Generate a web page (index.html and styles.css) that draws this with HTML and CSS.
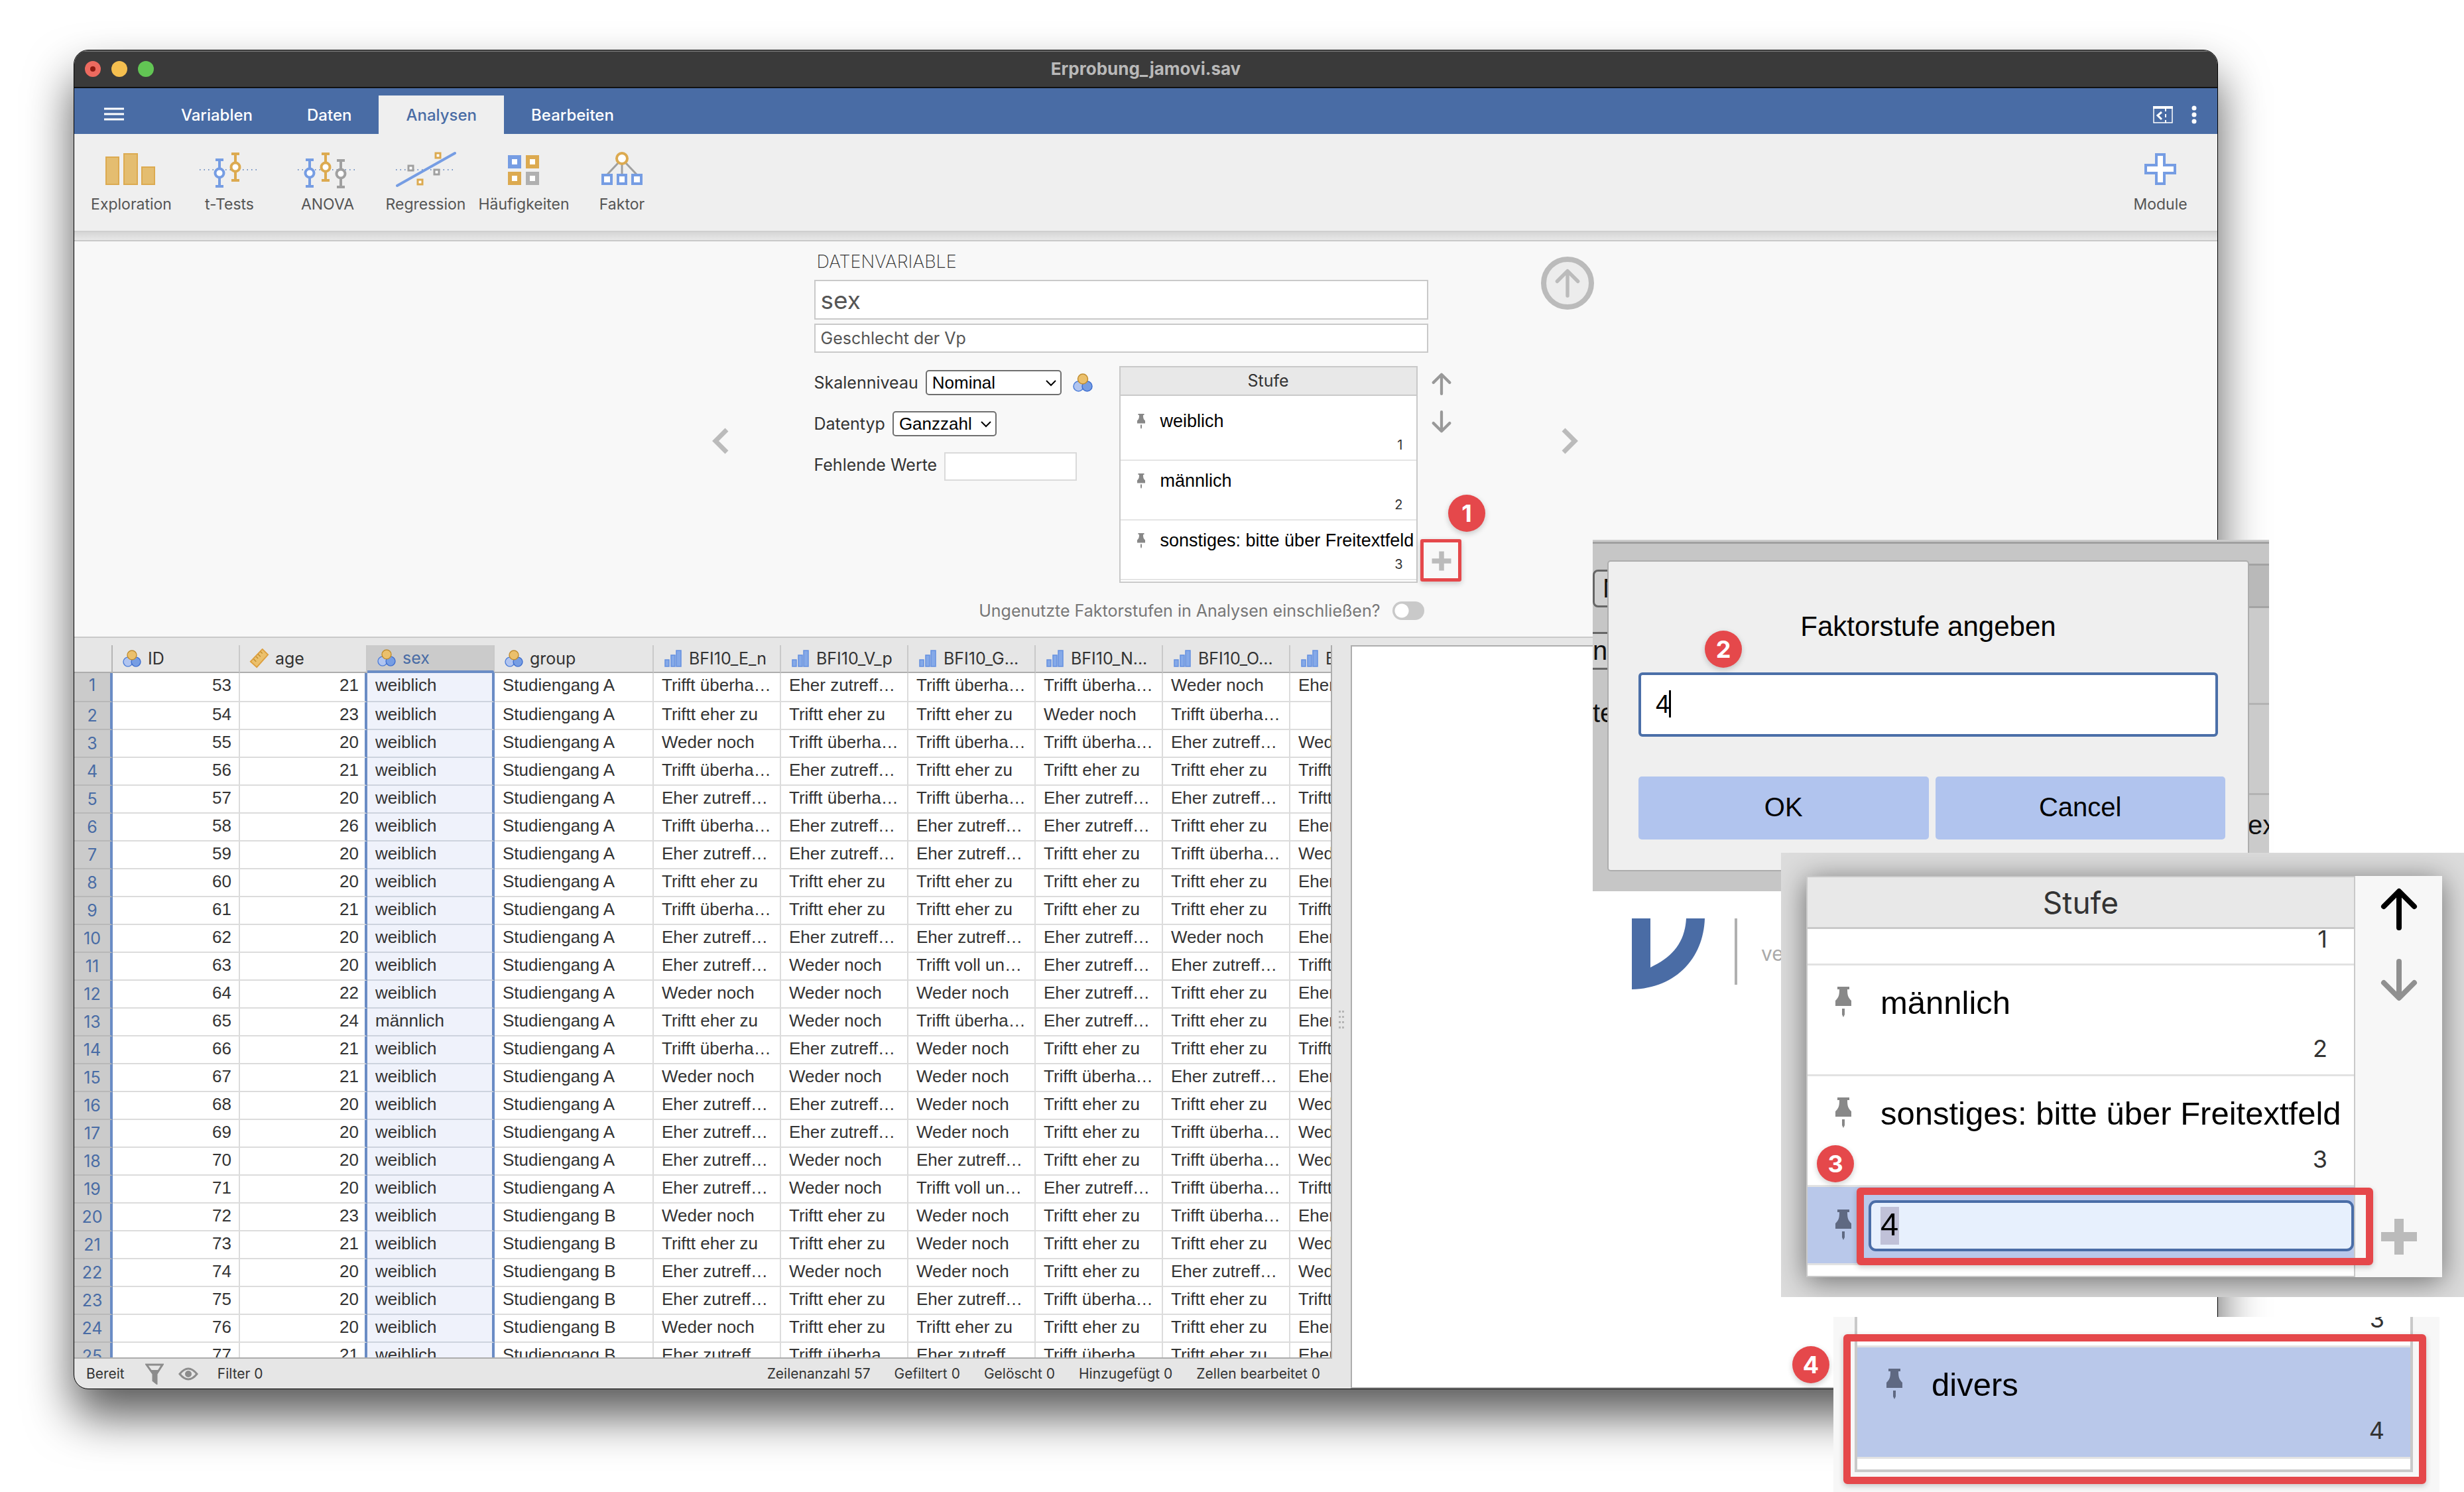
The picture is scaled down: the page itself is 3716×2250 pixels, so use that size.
FILE: index.html
```html
<!DOCTYPE html>
<html lang="de">
<head>
<meta charset="utf-8">
<title>Erprobung_jamovi.sav</title>
<link rel="stylesheet" href="styles.css">
</head>
<body>
<svg class="symbols" aria-hidden="true">
  <symbol id="nominal" viewBox="0 0 30 28">
    <circle cx="8.500" cy="19.500" r="7.500" fill="#b1c5f0" stroke="#4f7fd9" stroke-width="1.500"/>
    <circle cx="21.500" cy="19.500" r="7.500" fill="#769de3" stroke="#3f6fd0" stroke-width="1.500"/>
    <circle cx="15" cy="8.500" r="7.500" fill="#ebc06c" stroke="#c08d30" stroke-width="1.500"/>
  </symbol>
  <symbol id="continuous" viewBox="0 0 32 32">
    <path d="M2 21 21 1 30 10 12 30Z" fill="#ebc06c" stroke="#dd9f3e" stroke-width="2"/>
    <path d="M7 17l4 4M11 13l3 3M14 9l4 4M18 5l3 3" stroke="#c08d30" stroke-width="1.500"/>
  </symbol>
  <symbol id="ordinal" viewBox="0 0 26 26">
    <path d="M1 15h6v10H1ZM10 8h6v17h-6ZM18 1h7v24h-7Z" fill="#85a9e8" stroke="#6490e0" stroke-width="1.500"/>
  </symbol>
  <symbol id="pin" viewBox="0 0 24 46">
    <path d="M3 0h18v4h-3c0 9 1 12 6 17v8H0v-8c5-5 6-8 6-17H3ZM10 33h4v9l-2 4-2-4Z" fill="currentColor"/>
  </symbol>
  <symbol id="arrow-up" viewBox="0 0 56 64">
    <path d="M28 60V7M5 28 28 5l23 23" fill="none" stroke="currentColor" stroke-width="8" stroke-linecap="round" stroke-linejoin="round"/>
  </symbol>
  <symbol id="arrow-down" viewBox="0 0 56 64">
    <path d="M28 4v53M5 36l23 23 23-23" fill="none" stroke="currentColor" stroke-width="8" stroke-linecap="round" stroke-linejoin="round"/>
  </symbol>
  <symbol id="plus" viewBox="0 0 56 56">
    <path d="M21 1h14v20h20v14H35v20H21V35H1V21h20Z" fill="currentColor"/>
  </symbol>
</svg>

<main class="window">
  <header class="titlebar">
    <div class="lights"><span class="light close"></span><span class="light minimise"></span><span class="light zoom"></span></div>
    <h1 class="title">Erprobung_jamovi.sav</h1>
  </header>

  <nav class="tabs">
    <button class="menu" aria-label="Menü"><svg width="30" height="20" viewBox="0 0 30 20"><path d="M0 2h30M0 10h30M0 18h30" stroke="#fff" stroke-width="3"/></svg></button>
    <button class="tab">Variablen</button>
    <button class="tab">Daten</button>
    <button class="tab active">Analysen</button>
    <button class="tab">Bearbeiten</button>
    <div class="tab-tools">
      <button aria-label="Ergebnisse einblenden"><svg width="30" height="26" viewBox="0 0 30 26"><path d="M1 2h28v23H1Z" fill="none" stroke="#fff" stroke-width="1.500"/><path d="M0 2h30" stroke="#fff" stroke-width="4"/><path d="M13 9l-6 5 6 6" fill="none" stroke="#fff" stroke-width="3"/><path d="M19 4v4M19 12v5M19 21v4" stroke="#fff" stroke-width="2"/></svg></button>
      <button aria-label="Optionen"><svg width="8" height="28" viewBox="0 0 8 28"><g fill="#fff"><circle cx="4" cy="4" r="3.500"/><circle cx="4" cy="14" r="3.500"/><circle cx="4" cy="24" r="3.500"/></g></svg></button>
    </div>
  </nav>

  <section class="ribbon">
    <button class="tool"><svg width="96" height="56" viewBox="0 0 96 56"><g fill="#e4bd70" stroke="#dcaa50" stroke-width="2"><path d="M10 9h19v41H10ZM37 4h20v46H37ZM64 24h19v26H64Z"/></g></svg>Exploration</button>
    <button class="tool"><svg width="96" height="56" viewBox="0 0 96 56"><path d="M3 28h90" stroke="#4b74b5" stroke-width="1.500" stroke-dasharray="1.500 5"/><g fill="#fff" stroke="#769de3" stroke-width="4"><path d="M33 13v40M27 13h12M27 53h12"/><circle cx="33" cy="33" r="6.500"/></g><g fill="#fff" stroke="#dcaa50" stroke-width="4"><path d="M57 4v40M51 4h12M51 44h12"/><circle cx="57" cy="24" r="6.500"/></g></svg>t-Tests</button>
    <button class="tool"><svg width="96" height="56" viewBox="0 0 96 56"><path d="M3 28h90" stroke="#4b74b5" stroke-width="1.500" stroke-dasharray="1.500 5"/><g fill="#fff" stroke="#769de3" stroke-width="4"><path d="M21 13v40M15 13h12M15 53h12"/><circle cx="21" cy="33" r="6.500"/></g><g fill="#fff" stroke="#dcaa50" stroke-width="4"><path d="M45 4v40M39 4h12M39 44h12"/><circle cx="45" cy="24" r="6.500"/></g><g fill="#fff" stroke="#a0a0a0" stroke-width="4"><path d="M68 14v40M62 14h12M62 54h12"/><circle cx="68" cy="34" r="6.500"/></g></svg>ANOVA</button>
    <button class="tool"><svg width="96" height="56" viewBox="0 0 96 56"><path d="M3 28h90" stroke="#4b74b5" stroke-width="1.500" stroke-dasharray="1.500 5"/><path d="M5 52 92 3" stroke="#769de3" stroke-width="4" stroke-linecap="round"/><g fill="#fff" stroke-width="3"><path d="M22 22h7v7h-7ZM61 28h7v7h-7Z" stroke="#a0a0a0"/><path d="M63 3h7v7h-7ZM36 43h7v7h-7Z" stroke="#dcaa50"/></g></svg>Regression</button>
    <button class="tool"><svg width="96" height="56" viewBox="0 0 96 56"><g fill="#fff" stroke-width="6"><path d="M27 9h14v14H27Z" stroke="#769de3"/><path d="M54 9h14v14H54ZM27 34h14v14H27Z" stroke="#dcaa50"/><path d="M54 34h14v14H54Z" stroke="#b0b0b0"/></g></svg>Häufigkeiten</button>
    <button class="tool"><svg width="96" height="56" viewBox="0 0 96 56"><path d="M42 18 26 35M48 18v17M54 18l16 17" stroke="#a0a0a0" stroke-width="3"/><circle cx="48" cy="11" r="8" fill="#fff" stroke="#dcaa50" stroke-width="4"/><g fill="#fff" stroke="#769de3" stroke-width="4"><path d="M19 36h13v13H19ZM42 36h12v13H42ZM64 36h13v13H64Z"/></g></svg>Faktor</button>
    <button class="tool module"><svg width="96" height="56" viewBox="0 0 96 56"><path d="M42 5h12v16h16v12H54v16H42V33H26V21h16Z" fill="#fff" stroke="#769de3" stroke-width="4"/></svg>Module</button>
  </section>
  <div class="ribbon-shadow"></div>

  <section class="editor">
    <button class="previous" aria-label="Vorherige Variable"><svg width="25" height="40" viewBox="0 0 25 40"><path d="M22 3 5 20l17 17" fill="none" stroke="#bbb" stroke-width="7"/></svg></button>
    <div class="form">
      <h2 class="kind">DATENVARIABLE</h2>
      <input class="name" value="sex" aria-label="Name">
      <input class="description" value="Geschlecht der Vp" aria-label="Beschreibung">
      <div class="details">
        <div class="fields">
          <div class="field"><label for="measure">Skalenniveau</label><span class="select wide"><select id="measure"><option>Nominal</option></select><svg width="18" height="12" viewBox="0 0 18 12"><path d="M2 2l7 7 7-7" fill="none" stroke="#000" stroke-width="2"/></svg></span><svg class="measure-icon" width="30" height="28"><use href="#nominal"/></svg></div>
          <div class="field"><label for="type">Datentyp</label><span class="select"><select id="type"><option>Ganzzahl</option></select><svg width="18" height="12" viewBox="0 0 18 12"><path d="M2 2l7 7 7-7" fill="none" stroke="#000" stroke-width="2"/></svg></span></div>
          <div class="field"><label for="missing">Fehlende Werte</label><input id="missing" class="missing"></div>
        </div>
        <div class="levels">
          <div class="levels-head">Stufe</div>
          <ul>
            <li><svg class="pin"><use href="#pin"/></svg><span class="label">weiblich</span><span class="value">1</span></li>
            <li><svg class="pin"><use href="#pin"/></svg><span class="label">männlich</span><span class="value">2</span></li>
            <li><svg class="pin"><use href="#pin"/></svg><span class="label">sonstiges: bitte über Freitextfeld</span><span class="value">3</span></li>
          </ul>
        </div>
        <div class="level-tools">
          <button aria-label="Nach oben"><svg width="30" height="34"><use href="#arrow-up"/></svg></button>
          <button aria-label="Nach unten"><svg width="30" height="34"><use href="#arrow-down"/></svg></button>
          <button class="add" aria-label="Stufe hinzufügen"><svg width="30" height="30"><use href="#plus"/></svg></button>
        </div>
      </div>
      <div class="unused"><label for="unused">Ungenutzte Faktorstufen in Analysen einschließen?</label><input id="unused" type="checkbox" class="switch"></div>
    </div>
    <div class="side">
      <button class="collapse" aria-label="Schließen"><svg width="38" height="44"><use href="#arrow-up"/></svg></button>
      <button class="next" aria-label="Nächste Variable"><svg width="25" height="40" viewBox="0 0 25 40"><path d="M3 3l17 17L3 37" fill="none" stroke="#bbb" stroke-width="7"/></svg></button>
    </div>
  </section>

  <section class="workspace">
    <div class="data">
      <div class="sheet">
        <table>
          <colgroup><col class="c-row"><col><col><col><col class="c-group"><col><col><col><col><col><col></colgroup>
          <thead><tr><th></th>
            <th><span><svg class="ic"><use href="#nominal"/></svg>ID</span></th>
            <th><span><svg class="ic tall"><use href="#continuous"/></svg>age</span></th>
            <th class="chosen"><span><svg class="ic"><use href="#nominal"/></svg>sex</span></th>
            <th><span><svg class="ic"><use href="#nominal"/></svg>group</span></th>
            <th><span><svg class="ic"><use href="#ordinal"/></svg>BFI10_E_n</span></th>
            <th><span><svg class="ic"><use href="#ordinal"/></svg>BFI10_V_p</span></th>
            <th><span><svg class="ic"><use href="#ordinal"/></svg>BFI10_G...</span></th>
            <th><span><svg class="ic"><use href="#ordinal"/></svg>BFI10_N...</span></th>
            <th><span><svg class="ic"><use href="#ordinal"/></svg>BFI10_O...</span></th>
            <th><span><svg class="ic"><use href="#ordinal"/></svg>BFI10_E_p</span></th></tr></thead>
          <tbody>
<tr><th>1<td>53<td>21<td>weiblich<td>Studiengang A<td>Trifft überha…<td>Eher zutreff…<td>Trifft überha…<td>Trifft überha…<td>Weder noch<td>Eher zutreff…</tr>
<tr><th>2<td>54<td>23<td>weiblich<td>Studiengang A<td>Triftt eher zu<td>Triftt eher zu<td>Triftt eher zu<td>Weder noch<td>Trifft überha…<td></tr>
<tr><th>3<td>55<td>20<td>weiblich<td>Studiengang A<td>Weder noch<td>Trifft überha…<td>Trifft überha…<td>Trifft überha…<td>Eher zutreff…<td>Weder noch</tr>
<tr><th>4<td>56<td>21<td>weiblich<td>Studiengang A<td>Trifft überha…<td>Eher zutreff…<td>Triftt eher zu<td>Triftt eher zu<td>Triftt eher zu<td>Trifft überha…</tr>
<tr><th>5<td>57<td>20<td>weiblich<td>Studiengang A<td>Eher zutreff…<td>Trifft überha…<td>Trifft überha…<td>Eher zutreff…<td>Eher zutreff…<td>Triftt eher zu</tr>
<tr><th>6<td>58<td>26<td>weiblich<td>Studiengang A<td>Trifft überha…<td>Eher zutreff…<td>Eher zutreff…<td>Eher zutreff…<td>Triftt eher zu<td>Eher zutreff…</tr>
<tr><th>7<td>59<td>20<td>weiblich<td>Studiengang A<td>Eher zutreff…<td>Eher zutreff…<td>Eher zutreff…<td>Triftt eher zu<td>Trifft überha…<td>Weder noch</tr>
<tr><th>8<td>60<td>20<td>weiblich<td>Studiengang A<td>Triftt eher zu<td>Triftt eher zu<td>Triftt eher zu<td>Triftt eher zu<td>Triftt eher zu<td>Eher zutreff…</tr>
<tr><th>9<td>61<td>21<td>weiblich<td>Studiengang A<td>Trifft überha…<td>Triftt eher zu<td>Triftt eher zu<td>Triftt eher zu<td>Triftt eher zu<td>Trifft überha…</tr>
<tr><th>10<td>62<td>20<td>weiblich<td>Studiengang A<td>Eher zutreff…<td>Eher zutreff…<td>Eher zutreff…<td>Eher zutreff…<td>Weder noch<td>Eher zutreff…</tr>
<tr><th>11<td>63<td>20<td>weiblich<td>Studiengang A<td>Eher zutreff…<td>Weder noch<td>Trifft voll un…<td>Eher zutreff…<td>Eher zutreff…<td>Trifft überha…</tr>
<tr><th>12<td>64<td>22<td>weiblich<td>Studiengang A<td>Weder noch<td>Weder noch<td>Weder noch<td>Eher zutreff…<td>Triftt eher zu<td>Eher zutreff…</tr>
<tr><th>13<td>65<td>24<td>männlich<td>Studiengang A<td>Triftt eher zu<td>Weder noch<td>Trifft überha…<td>Eher zutreff…<td>Triftt eher zu<td>Eher zutreff…</tr>
<tr><th>14<td>66<td>21<td>weiblich<td>Studiengang A<td>Trifft überha…<td>Eher zutreff…<td>Weder noch<td>Triftt eher zu<td>Triftt eher zu<td>Trifft überha…</tr>
<tr><th>15<td>67<td>21<td>weiblich<td>Studiengang A<td>Weder noch<td>Weder noch<td>Weder noch<td>Trifft überha…<td>Eher zutreff…<td>Eher zutreff…</tr>
<tr><th>16<td>68<td>20<td>weiblich<td>Studiengang A<td>Eher zutreff…<td>Eher zutreff…<td>Weder noch<td>Triftt eher zu<td>Triftt eher zu<td>Weder noch</tr>
<tr><th>17<td>69<td>20<td>weiblich<td>Studiengang A<td>Eher zutreff…<td>Eher zutreff…<td>Weder noch<td>Triftt eher zu<td>Trifft überha…<td>Weder noch</tr>
<tr><th>18<td>70<td>20<td>weiblich<td>Studiengang A<td>Eher zutreff…<td>Weder noch<td>Eher zutreff…<td>Triftt eher zu<td>Trifft überha…<td>Weder noch</tr>
<tr><th>19<td>71<td>20<td>weiblich<td>Studiengang A<td>Eher zutreff…<td>Weder noch<td>Trifft voll un…<td>Eher zutreff…<td>Trifft überha…<td>Triftt eher zu</tr>
<tr><th>20<td>72<td>23<td>weiblich<td>Studiengang B<td>Weder noch<td>Triftt eher zu<td>Weder noch<td>Triftt eher zu<td>Trifft überha…<td>Eher zutreff…</tr>
<tr><th>21<td>73<td>21<td>weiblich<td>Studiengang B<td>Triftt eher zu<td>Triftt eher zu<td>Weder noch<td>Triftt eher zu<td>Triftt eher zu<td>Weder noch</tr>
<tr><th>22<td>74<td>20<td>weiblich<td>Studiengang B<td>Eher zutreff…<td>Weder noch<td>Weder noch<td>Triftt eher zu<td>Eher zutreff…<td>Weder noch</tr>
<tr><th>23<td>75<td>20<td>weiblich<td>Studiengang B<td>Eher zutreff…<td>Triftt eher zu<td>Eher zutreff…<td>Trifft überha…<td>Triftt eher zu<td>Triftt eher zu</tr>
<tr><th>24<td>76<td>20<td>weiblich<td>Studiengang B<td>Weder noch<td>Triftt eher zu<td>Triftt eher zu<td>Triftt eher zu<td>Triftt eher zu<td>Eher zutreff…</tr>
<tr><th>25<td>77<td>21<td>weiblich<td>Studiengang B<td>Eher zutreff…<td>Trifft überha…<td>Eher zutreff…<td>Trifft überha…<td>Triftt eher zu<td>Eher zutreff…</tr>
          </tbody>
        </table>
      </div>
      <svg class="grip" width="8" height="30" viewBox="0 0 8 30"><g fill="#b5b5b5"><path d="M0 2h3v3H0ZM5 2h3v3H5ZM0 10h3v3H0ZM5 10h3v3H5ZM0 18h3v3H0ZM5 18h3v3H5ZM0 26h3v3H0ZM5 26h3v3H5Z"/></g></svg>
      <footer class="status">
        <span>Bereit</span>
        <svg width="28" height="32" viewBox="0 0 28 32"><path d="M2 2h24L17 16v14l-5-4V16Z" fill="none" stroke="#8c8c8c" stroke-width="3"/><path d="M6 10h16l-5 7v14l-5-4V17Z" fill="#8c8c8c"/></svg>
        <svg width="30" height="20" viewBox="0 0 30 20"><path d="M2 10Q15-6 28 10 15 26 2 10Z" fill="none" stroke="#8c8c8c" stroke-width="3"/><circle cx="15" cy="10" r="5" fill="#8c8c8c"/></svg>
        <span class="filter">Filter 0</span>
        <div class="counts"><span>Zeilenanzahl 57</span><span>Gefiltert 0</span><span>Gelöscht 0</span><span>Hinzugefügt 0</span><span>Zellen bearbeitet 0</span></div>
      </footer>
    </div>
    <div class="results">
      <svg width="110" height="107" viewBox="0 0 110 107"><path d="M0 0h28v74C62 58 80 36 82 0h28C108 62 64 106 0 107Z" fill="#4a6ca5"/></svg>
      <span class="version">version</span>
    </div>
  </section>
</main>

<section class="shot prompt-shot">
  <div class="ghost-strip"></div>
  <div class="ghost-left"><span class="ghost-box">N</span><span class="ghost-lines">n</span><span class="ghost-word">te</span></div>
  <div class="ghost-right"><span class="ghost-head"></span><span class="ghost-row"></span><span class="ghost-row"></span><span class="ghost-word">ex</span></div>
  <form class="prompt">
    <label for="level">Faktorstufe angeben</label>
    <div class="entry"><input id="level" value="4"><span class="caret"></span></div>
    <div class="actions"><button type="button">OK</button><button type="button">Cancel</button></div>
  </form>
</section>

<section class="shot list-shot">
  <div class="big-list">
    <div class="levels-head">Stufe</div>
    <div class="big-row cut"><span class="value">1</span></div>
    <div class="big-row"><svg class="pin"><use href="#pin"/></svg><span class="label">männlich</span><span class="value">2</span></div>
    <div class="big-row"><svg class="pin"><use href="#pin"/></svg><span class="label">sonstiges: bitte über Freitextfeld</span><span class="value">3</span></div>
    <div class="big-row editing"><svg class="pin"><use href="#pin"/></svg><input value="4" aria-label="Stufenbezeichnung"></div>
  </div>
  <div class="big-tools">
    <button class="dark" aria-label="Nach oben"><svg width="56" height="64"><use href="#arrow-up"/></svg></button>
    <button aria-label="Nach unten"><svg width="56" height="64"><use href="#arrow-down"/></svg></button>
    <button class="add" aria-label="Stufe hinzufügen"><svg width="56" height="56"><use href="#plus"/></svg></button>
  </div>
</section>

<section class="shot done-shot">
  <div class="done-list">
    <div class="big-row cut"><span class="value">3</span></div>
    <div class="big-row picked"><svg class="pin"><use href="#pin"/></svg><span class="label">divers</span><span class="value">4</span></div>
  </div>
</section>

<div class="frame frame-1"></div>
<div class="frame frame-3"></div>
<div class="frame frame-4"></div>
<span class="badge badge-1">1</span>
<span class="badge badge-2">2</span>
<span class="badge badge-3">3</span>
<span class="badge badge-4">4</span>
</body>
</html>
```
FILE: styles.css
```css
* { box-sizing: border-box; }

body {
  position: relative;
  margin: 0;
  height: 100vh;
  padding: 75px 371px 155px 111px;
  overflow: hidden;
  background: #fff;
  color: #333;
  font-family: Inter, "Liberation Sans", sans-serif;
  font-size: 25px;
}

h1, h2, ul { margin: 0; padding: 0; font-weight: 400; }
li { list-style: none; }
svg { display: block; flex: none; }
button { margin: 0; padding: 0; border: 0; background: none; color: inherit; font: inherit; }
input, select { margin: 0; font: inherit; color: inherit; outline: 0; border-radius: 0; }
.symbols { position: absolute; width: 0; height: 0; }

/* Window */
.window {
  display: flex;
  flex-direction: column;
  height: 100%;
  border: 1px solid #000;
  border-radius: 22px;
  overflow: hidden;
  background: #e6e6e6;
  box-shadow: 0 40px 70px rgba(0, 0, 0, .65);
}

.titlebar {
  display: grid;
  grid-template-columns: 1fr auto 1fr;
  align-items: center;
  height: 57px;
  padding: 0 16px;
  border-bottom: 2px solid #111;
  background: #3a3a3a;
  box-shadow: inset 0 2px 0 #6d6d6d;
}
.lights { display: flex; gap: 16px; }
.light { width: 24px; height: 24px; border-radius: 50%; }
.close { border: 8px solid #ed6a5f; background: #8c1a11; }
.minimise { background: #f5bf4f; }
.zoom { background: #62c554; }
.title { color: #b9b9b9; font-size: 26px; font-weight: 700; }

.tabs { display: flex; align-items: flex-end; height: 69px; background: #496ca5; color: #fff; }
.menu { align-self: center; padding: 12px 45px 4px 45px; }
.tab { height: 58px; padding: 0 41px; font-size: 24px; font-weight: 500; }
.tab.active { background: #efefef; color: #496ca5; }
.tab-tools { display: flex; align-items: center; gap: 28px; height: 58px; margin-left: auto; padding-right: 31px; }

.ribbon { display: flex; height: 146px; padding: 26px 12px 0 12px; background: #efefef; color: #555; }
.tool { display: flex; flex-direction: column; align-items: center; gap: 8px; width: 148px; height: 100px; font-size: 23px; line-height: 32px; white-space: nowrap; }
.module { margin-left: auto; }
.ribbon-shadow { height: 16px; border-top: 2px solid #cfcfcf; border-bottom: 2px solid #c9c9c9; background: linear-gradient(#d6d6d6, #e8e8e8); }

/* Variable editor */
.editor {
  display: flex;
  justify-content: center;
  height: 598px;
  padding: 13px 6px 0 0;
  border-bottom: 2px solid #c9c9c9;
  background: #f8f8f8;
}
.previous { display: flex; justify-content: center; width: 80px; height: 40px; margin: 268px 101px 0 0; }
.side { display: flex; flex-direction: column; align-items: center; width: 80px; margin-left: 135px; padding-top: 10px; }
.collapse { display: flex; align-items: center; justify-content: center; width: 80px; height: 80px; border: 8px solid #bbb; border-radius: 50%; background: #ececec; color: #bbb; }
.next { margin: 178px 0 0 8px; }

.form { width: 961px; }
.kind { height: 45px; padding-left: 4px; font-size: 27px; font-weight: 200; line-height: 36px; }
.name, .description { display: block; width: 926px; padding: 0 8px; border: 2px solid #c9c9c9; background: #fff; color: #555; }
.name { height: 60px; margin-bottom: 6px; font-size: 37px; }
.description { height: 44px; font-size: 25px; }

.details { display: flex; margin-top: 20px; }
.fields { display: flex; flex-direction: column; gap: 24px; width: 460px; padding-top: 6px; }
.field { display: flex; align-items: center; gap: 11px; height: 38px; }
.measure-icon { margin-left: 6px; }
.select { position: relative; width: 157px; }
.select.wide { width: 205px; }
.select select { appearance: none; display: block; width: 100%; height: 38px; padding: 0 8px; border: 2px solid #6f6f6f; border-radius: 5px; background: #fff; color: #000; font: 26px "Liberation Sans", sans-serif; }
.select svg { position: absolute; right: 7px; top: 14px; }
.missing { width: 200px; height: 43px; margin-top: 4px; border: 2px solid #dadada; background: #fff; }

.levels { width: 450px; height: 327px; border: 2px solid #c9c9c9; background: #fff; }
.levels-head { height: 43px; border-bottom: 2px solid #c9c9c9; background: #e8e8e8; font-size: 25px; line-height: 40px; text-align: center; }
.levels ul { padding-top: 8px; }
.levels li { display: grid; grid-template-columns: 35px minmax(0, 1fr); grid-template-rows: 34px 1fr; height: 90px; padding: 18px 20px 0 25px; border-bottom: 2px solid #e4e4e4; }
.levels .pin { width: 12px; height: 23px; margin-top: 1px; }
.pin { color: #888; }
.label { color: #000; font-family: "Liberation Sans", sans-serif; font-size: 27px; line-height: 24px; white-space: nowrap; }
.value { grid-column: 1 / -1; font-size: 20px; line-height: 28px; text-align: right; }
.level-tools { display: flex; flex-direction: column; gap: 23px; width: 30px; margin-left: 21px; padding: 10px 0 18px; color: #999; }
.add { margin-top: auto; color: #bbb; }

.unused { display: flex; align-items: center; justify-content: flex-end; gap: 18px; height: 28px; margin: 28px 41px 0 0; color: #777; }
.switch { appearance: none; width: 48px; height: 28px; border-radius: 14px; background: radial-gradient(circle at 14px 14px, #fff 10px, #c9c9c9 11px); }

/* Data sheet */
.workspace { display: grid; grid-template-columns: minmax(0, 1925fr) minmax(0, 1307fr); flex: 1; min-height: 0; padding-top: 11px; }
.data { display: grid; grid-template-columns: minmax(0, 1fr) 28px; grid-template-rows: minmax(0, 1fr) 45px; min-height: 0; }
.sheet { overflow: hidden; border-bottom: 2px solid #adadad; border-right: 2px solid #adadad; background: linear-gradient(#e6e6e6 40px, #fff 40px); }
.grip { align-self: center; justify-self: center; margin-top: 52px; }
table { width: 2026px; border-collapse: separate; border-spacing: 0; table-layout: fixed; }
col { width: 192px; }
.c-row { width: 58px; }
.c-group { width: 240px; }
thead th { height: 42px; padding: 0; border-bottom: 2px solid #adadad; border-right: 2px solid #c9c9c9; background: #e6e6e6; font-size: 25px; font-weight: 400; text-align: left; }
thead th:first-child { border-right-color: #b5b5b5; }
thead span { display: flex; align-items: center; gap: 9px; height: 36px; padding-left: 14px; white-space: nowrap; }
.ic { width: 30px; height: 26px; }
.tall { height: 30px; }
thead .chosen { border-bottom: 4px solid #6a8cc5; background: #cbcbcb; color: #496ca5; }
tbody th, td { height: 42px; padding: 0 11px 3px 12px; overflow: hidden; border-bottom: 2px solid #dcdcdc; font-size: 25px; line-height: 37px; white-space: nowrap; }
tbody tr:first-child > * { height: 44px; padding-bottom: 5px; }
tbody th { padding: 0; border-right: 4px solid #6a8cc5; border-bottom-color: #b8b8b8; background: #cbcbcb; color: #496ca5; font-weight: 400; text-align: center; }
td { border-right: 2px solid #dcdcdc; background: #fff; font-family: "Liberation Sans", sans-serif; font-size: 26px; }
td:nth-child(2), td:nth-child(3) { text-align: right; }
td:nth-child(3) { border-right: 4px solid #6a8cc5; padding-right: 9px; }
td:nth-child(4) { border-right: 4px solid #6a8cc5; border-bottom-color: #cdd3de; background: #eff2fb; }

.status { grid-column: 1 / -1; display: flex; align-items: center; padding: 0 46px 0 18px; font-size: 21px; white-space: nowrap; }
.status svg:nth-of-type(1) { margin: 0 22px 0 31px; }
.filter { margin-left: 29px; }
.counts { display: flex; gap: 36px; margin-left: auto; }

.results { display: flex; gap: 45px; border: 2px solid #adadad; border-right: 0; background: #fff; padding: 410px 0 0 422px; }
.version { height: 100px; padding-left: 36px; border-left: 4px solid #b0b0b0; color: #aaa; font-size: 30px; line-height: 106px; }

/* Detail pictures laid over the window */
.shot { position: absolute; overflow: hidden; }
.prompt-shot { left: 2402px; top: 814px; width: 1020px; height: 530px; background: #c6c6c6; font-family: "Liberation Sans", sans-serif; font-size: 40px; color: #111; }
.ghost-strip { height: 6px; border-bottom: 3px solid #a0a0a0; background: #cbcbcb; }
.ghost-left, .ghost-right { position: absolute; top: 6px; bottom: 0; width: 32px; }
.ghost-left { left: 0; padding-top: 39px; }
.ghost-left span { display: block; }
.ghost-box { height: 57px; padding-left: 12px; border: 3px solid #666; border-radius: 8px; background: #d0d0d0; line-height: 51px; }
.ghost-lines { height: 57px; margin: 37px 0 42px; border: solid #666; border-width: 3px 0; background: #d0d0d0; line-height: 50px; }
.ghost-right { right: 0; padding-top: 30px; background: linear-gradient(#c6c6c6 30px, #cbcbcb 30px); }
.ghost-right span { display: block; }
.ghost-head { height: 67px; border: solid #a3a3a3; border-width: 3px 0; background: #b9b9b9; }
.ghost-row { height: 146px; border-bottom: 3px solid #b3b3b3; }
.ghost-row + .ghost-row { height: 136px; }
.ghost-word { line-height: 46px; }
.ghost-right .ghost-word { margin-top: 22px; }
.prompt { position: absolute; left: 22px; right: 30px; top: 31px; height: 469px; padding: 74px 34px 0 45px; border: 2px solid #adadad; border-radius: 5px; background: #efefef; color: #000; }
.prompt label { display: block; padding-right: 11px; font-size: 42px; line-height: 48px; text-align: center; }
.entry { position: relative; margin: 45px 11px 60px 0; }
.entry input { display: block; width: 100%; height: 97px; padding: 0 22px; border: 4px solid #4b6fa8; border-radius: 6px; background: #fff; font-size: 38px; }
.caret { position: absolute; left: 46px; top: 27px; width: 3px; height: 41px; background: #000; }
.actions { display: grid; grid-template-columns: 1fr 1fr; gap: 10px; }
.actions button { height: 95px; padding-bottom: 2px; border-radius: 5px; background: #b1c4ee; font-size: 40px; }

.list-shot { left: 2686px; right: 0; top: 1286px; height: 670px; display: flex; padding: 35px 33px 30px 38px; background: #dcdcdc; }
.list-shot::before { content: ""; position: absolute; inset: 35px 33px 30px 38px; box-shadow: 0 6px 40px rgba(0, 0, 0, .5); }
.big-list { position: relative; flex: 1; min-width: 0; border: 2px solid #c9c9c9; background: #fff; }
.big-list .levels-head { height: 78px; border-bottom-width: 3px; font-size: 46px; line-height: 76px; }
.big-row { display: grid; grid-template-columns: 68px minmax(0, 1fr); grid-template-rows: 56px 1fr; height: 167px; padding: 32px 40px 0 42px; border-bottom: 3px solid #e2e2e2; }
.big-row .pin { width: 24px; height: 46px; }
.big-row .label { font-size: 49px; line-height: 48px; }
.big-row .value { padding-top: 14px; font-size: 36px; line-height: 46px; }
.big-row.cut { display: flex; justify-content: flex-end; height: 55px; padding-top: 0; overflow: hidden; }
.big-row.cut .value { height: 40px; padding: 0; line-height: 30px; }
.big-row.editing { display: flex; align-items: flex-start; height: 118px; padding: 20px 0 0 42px; background: #b9c8ea; }
.editing .pin { margin: 14px 26px 0 0; }
.big-row.editing .pin, .picked .pin { color: #5f6982; }
.editing input { flex: 1; min-width: 0; height: 77px; padding: 0 14px 6px; border: 4px solid #4a6da7; border-radius: 11px; background: linear-gradient(#c0c1d8, #c0c1d8) 14px 6px / 28px 57px no-repeat #e7f0fd; color: #000; font-family: "Liberation Sans", sans-serif; font-size: 49px; }
.big-tools { position: relative; display: flex; flex-direction: column; align-items: center; gap: 43px; width: 131px; padding: 18px 0 33px; background: #f7f7f7; color: #909090; }
.big-tools .dark { color: #000; }

.done-shot { left: 2765px; top: 1986px; width: 914px; height: 264px; padding: 0 40px 0 32px; background: #f7f7f7; }
.done-list { height: 234px; border: solid #c9c9c9; border-width: 0 4px 4px; background: #fff; }
.done-list .big-row { padding-right: 39px; padding-left: 44px; }
.done-list .big-row.cut { height: 46px; }
.done-list .big-row.cut .value { line-height: 6px; }
.done-list .picked { height: 168px; background: #b9c8ea; }

/* Step markers */
.frame { position: absolute; border: 11px solid #e5484b; border-radius: 6px; box-shadow: 0 3px 8px rgba(0, 0, 0, .2); }
.frame-1 { left: 2142px; top: 813px; width: 62px; height: 64px; border-width: 5px; border-radius: 3px; }
.frame-3 { left: 2800px; top: 1791px; width: 779px; height: 117px; }
.frame-4 { left: 2780px; top: 2012px; width: 879px; height: 226px; }
.badge { position: absolute; width: 56px; height: 56px; border-radius: 50%; background: #e5484b; box-shadow: 0 3px 8px rgba(0, 0, 0, .2); color: #fff; font-size: 36px; font-weight: 700; line-height: 56px; text-align: center; }
.badge-1 { left: 2184px; top: 746px; }
.badge-2 { left: 2571px; top: 951px; }
.badge-3 { left: 2740px; top: 1727px; }
.badge-4 { left: 2703px; top: 2030px; }
```
